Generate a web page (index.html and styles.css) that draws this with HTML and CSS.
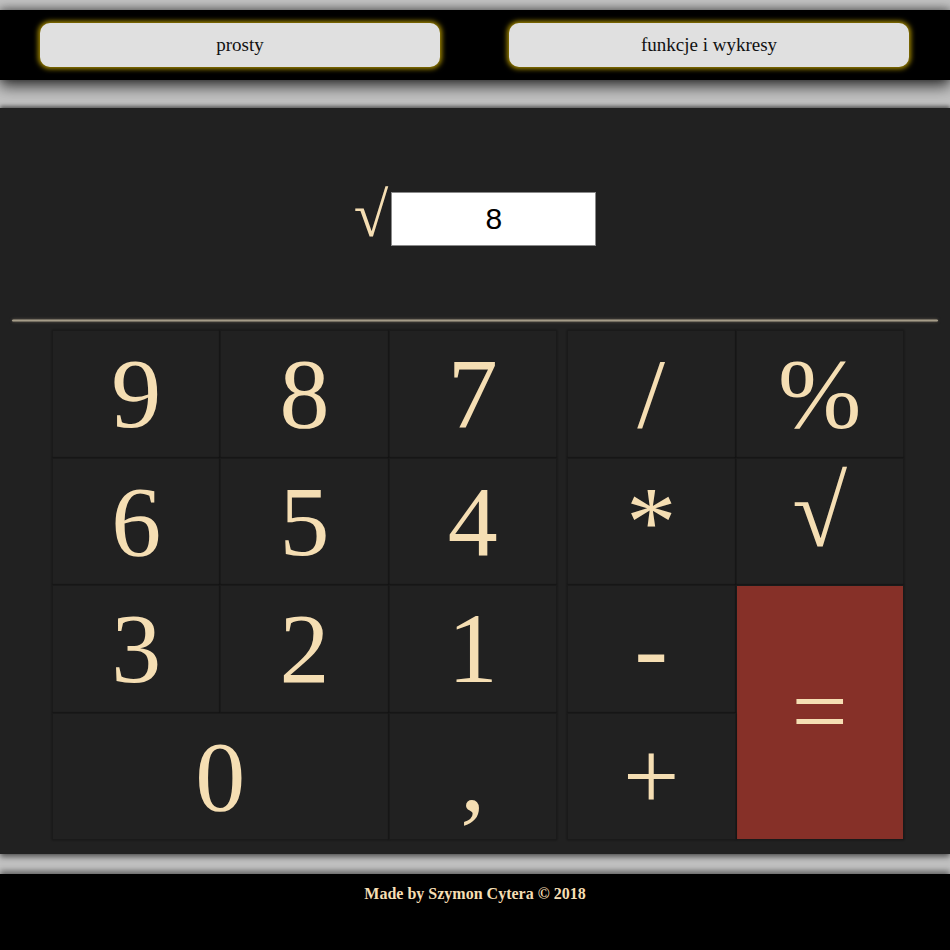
FILE: index.html
```html
<!DOCTYPE html>
<html lang="pl">
<head>
<meta charset="utf-8">
<title>Kalkulator</title>
<link rel="stylesheet" href="styles.css">
</head>
<body>
<nav class="nav">
  <button class="nav-btn">prosty</button>
  <button class="nav-btn">funkcje i wykresy</button>
</nav>
<main class="calc">
  <div class="display">
    <span class="display-root">√</span>
    <input class="display-input" type="text" value="8">
  </div>
  <div class="divider"></div>
  <div class="keypad">
    <div class="keys keys-num">
      <div class="key">9</div>
      <div class="key">8</div>
      <div class="key">7</div>
      <div class="key">6</div>
      <div class="key">5</div>
      <div class="key">4</div>
      <div class="key">3</div>
      <div class="key">2</div>
      <div class="key">1</div>
      <div class="key key-wide">0</div>
      <div class="key">,</div>
    </div>
    <div class="keys keys-op">
      <div class="key">/</div>
      <div class="key">%</div>
      <div class="key">*</div>
      <div class="key key-root">√</div>
      <div class="key key-minus">-</div>
      <div class="key key-eq">=</div>
      <div class="key">+</div>
    </div>
  </div>
</main>
<footer class="footer">Made by Szymon Cytera © 2018</footer>
</body>
</html>
```
FILE: styles.css
```css
html, body {
  margin: 0;
  padding: 0;
}
body {
  background: #c2c2c2;
  padding-top: 10px;
  height: 940px;
  overflow: hidden;
  font-family: "Liberation Serif", "Times New Roman", serif;
}
.nav {
  position: relative;
  z-index: 2;
  height: 70px;
  background: #000;
  display: flex;
  align-items: center;
  justify-content: space-between;
  padding: 0 40px 0 40px;
  box-shadow: 0 6px 14px rgba(0, 0, 0, 0.75), 0 -2px 8px rgba(0, 0, 0, 0.35);
}
.nav-btn {
  width: 400px;
  height: 44px;
  border: none;
  border-radius: 10px;
  background: #e0e0e0;
  font-family: "Liberation Serif", "Times New Roman", serif;
  font-size: 19px;
  color: #111;
  box-shadow: 0 0 5px 2px rgba(190, 160, 0, 0.85);
}
.nav-btn + .nav-btn {
  margin-right: 1px;
}
.calc {
  position: relative;
  z-index: 1;
  margin-top: 28px;
  height: 746px;
  box-sizing: border-box;
  background: #212121;
  padding-top: 84px;
  box-shadow: 0 -2px 4px rgba(0, 0, 0, 0.5), 0 3px 6px rgba(0, 0, 0, 0.55);
}
.display {
  display: flex;
  justify-content: center;
  align-items: center;
  height: 54px;
  gap: 3px;
}
.display-root {
  color: #f5deb3;
  font-size: 63px;
  line-height: 54px;
  transform: translateY(-4px);
}
.display-input {
  width: 205px;
  height: 54px;
  box-sizing: border-box;
  border: 1px solid #8a8a8a;
  background: #fff;
  margin: 0;
  padding: 0;
  text-align: center;
  font-family: "Liberation Sans", Arial, sans-serif;
  font-size: 30px;
  color: #000;
  outline: none;
}
.divider {
  margin: 73px 12px 0 12px;
  height: 3px;
  border-radius: 2px;
  background: linear-gradient(to bottom, #5c574e, #a59c88 50%, #5c574e);
  box-shadow: 0 0 3px rgba(120, 110, 95, 0.6);
}
.keypad {
  display: flex;
  gap: 10px;
  margin: 8px 0 0 52px;
}
.keys {
  display: grid;
  grid-template-rows: repeat(4, 127.5px);
}
.keys-num {
  width: 505px;
  grid-template-columns: repeat(3, 1fr);
}
.keys-op {
  width: 337px;
  grid-template-columns: repeat(2, 1fr);
}
.key {
  display: flex;
  align-items: center;
  justify-content: center;
  box-sizing: border-box;
  border: 1px solid #1a1a1a;
  box-shadow: 0 0 2px rgba(0, 0, 0, 0.45);
  background: #212121;
  color: #f5deb3;
  font-size: 100px;
  line-height: 115px;
}
.key-wide {
  grid-column: span 2;
}
.key-root {
  padding-bottom: 18px;
}
.key-eq {
  grid-row: span 2;
  background: #863028;
  padding-bottom: 2px;
}
.footer {
  position: relative;
  z-index: 1;
  margin-top: 20px;
  height: 76px;
  box-sizing: border-box;
  padding-top: 11px;
  background: #000;
  color: #f5deb3;
  text-align: center;
  font-weight: bold;
  font-size: 16px;
  line-height: 18px;
  box-shadow: 0 -3px 6px rgba(0, 0, 0, 0.5);
}
```
